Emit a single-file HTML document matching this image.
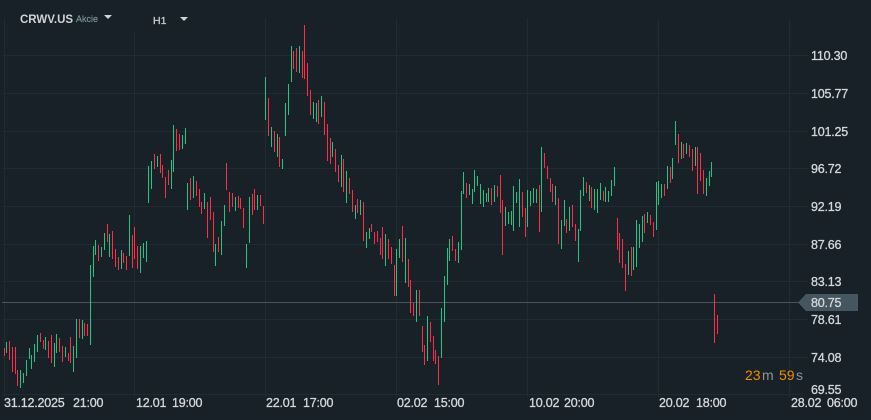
<!DOCTYPE html>
<html><head><meta charset="utf-8"><style>
html,body{margin:0;padding:0;background:#172127;width:871px;height:420px;overflow:hidden}
svg{display:block}
text{font-family:"Liberation Sans",sans-serif}
.p,.t{font-size:12.5px;letter-spacing:-.2px;fill:#d5d8da;stroke:#d5d8da;stroke-width:.3px}
</style></head><body>
<svg width="871" height="420" viewBox="0 0 871 420" xmlns="http://www.w3.org/2000/svg">
<rect width="871" height="420" fill="#172127"/>
<path shape-rendering="crispEdges" stroke="#212c32" stroke-width="1" fill="none" d="M2 55.5H808M2 93.5H808M2 131.5H808M2 168.5H808M2 206.5H808M2 244.5H808M2 281.5H808M2 319.5H808M2 357.5H808M2 394.5H803M4.5 18V397M134.5 32V397M265.5 18V397M396.5 18V397M527.5 18V397M658.5 18V397M789.5 18V397"/>
<path shape-rendering="crispEdges" stroke="#46555e" stroke-width="1" fill="none" d="M2 302.5H800"/>
<path shape-rendering="crispEdges" stroke="#ff2d46" stroke-width="1" fill="none" d="M4.5 348V356M9.5 341V360M12.5 347V372M15.5 347V374M17.5 370V386M40.5 333V342M43.5 340V349M48.5 341V358M51.5 335V363M59.5 338V352M62.5 346V362M68.5 353V361M70.5 337V363M79.5 319V338M84.5 323V336M87.5 324V336M98.5 245V261M107.5 224V242M112.5 231V259M115.5 249V267M118.5 257V270M123.5 253V263M126.5 256V270M132.5 235V268M134.5 227V259M137.5 246V269M154.5 154V169M160.5 154V173M162.5 165V178M165.5 177V198M168.5 170V185M176.5 129V151M179.5 134V150M190.5 178V200M196.5 181V196M199.5 189V207M201.5 202V214M207.5 202V238M210.5 197V220M213.5 212V252M218.5 237V252M226.5 163V190M229.5 192V212M232.5 193V207M238.5 196V208M240.5 198V209M243.5 208V228M252.5 194V215M254.5 189V210M260.5 195V206M263.5 206V224M268.5 98V136M274.5 131V152M279.5 137V167M293.5 51V69M296.5 48V72M302.5 51V78M304.5 25V79M307.5 63V96M310.5 90V115M318.5 100V124M324.5 102V135M327.5 124V161M330.5 138V164M335.5 149V172M338.5 165V182M343.5 159V192M349.5 178V194M352.5 190V212M357.5 199V213M363.5 202V241M371.5 224V232M374.5 232V244M377.5 231V242M380.5 238V255M382.5 227V259M388.5 239V259M391.5 247V264M394.5 265V296M402.5 226V262M408.5 259V287M410.5 280V313M413.5 303V316M419.5 290V316M422.5 326V352M424.5 345V365M430.5 322V342M433.5 336V361M435.5 350V364M438.5 356V385M452.5 236V251M455.5 249V261M466.5 183V198M491.5 188V205M497.5 186V197M500.5 175V213M502.5 200V255M522.5 192V217M525.5 208V237M539.5 185V232M544.5 153V168M547.5 166V179M550.5 178V192M552.5 184V202M558.5 198V244M566.5 219V233M572.5 205V227M575.5 224V241M586.5 182V193M591.5 187V208M603.5 191V201M617.5 218V250M619.5 233V263M622.5 239V268M625.5 264V291M631.5 247V276M644.5 214V233M650.5 215V225M653.5 222V237M664.5 184V196M670.5 167V183M678.5 134V163M683.5 144V158M689.5 145V157M692.5 149V171M697.5 147V194M700.5 153V181M703.5 170V194M714.5 294V343M717.5 315V334"/>
<path shape-rendering="crispEdges" stroke="#1fc77f" stroke-width="1" fill="none" d="M6.5 342V353M20.5 370V388M23.5 373V383M26.5 360V376M29.5 348V359M31.5 355V369M34.5 344V362M37.5 335V352M45.5 337V350M54.5 343V367M56.5 334V353M65.5 347V357M73.5 346V372M76.5 319V358M82.5 320V339M90.5 265V345M93.5 246V277M95.5 240V255M101.5 247V257M104.5 233V250M109.5 234V257M121.5 250V269M129.5 215V256M140.5 246V273M143.5 243V258M146.5 241V262M148.5 166V203M151.5 161V189M157.5 156V167M171.5 160V189M173.5 125V172M182.5 135V149M185.5 128V144M187.5 183V210M193.5 176V198M204.5 193V209M215.5 244V266M221.5 221V255M224.5 205V226M235.5 197V211M246.5 244V268M249.5 197V243M257.5 195V210M265.5 77V120M271.5 127V147M277.5 134V157M282.5 159V169M285.5 103V136M288.5 84V115M291.5 46V82M299.5 46V73M313.5 102V119M316.5 103V122M321.5 96V117M332.5 142V157M341.5 155V187M346.5 171V203M355.5 205V219M360.5 200V215M366.5 232V248M369.5 228V239M385.5 234V266M396.5 249V296M399.5 239V258M405.5 238V283M416.5 290V322M427.5 316V361M441.5 308V358M444.5 276V322M447.5 248V285M449.5 239V261M458.5 242V263M461.5 191V250M463.5 172V194M469.5 184V195M472.5 189V204M474.5 170V192M477.5 176V186M480.5 184V204M483.5 190V207M486.5 193V202M488.5 188V202M494.5 185V202M505.5 207V226M508.5 212V224M511.5 211V225M513.5 186V231M516.5 192V203M519.5 179V227M527.5 190V227M530.5 191V206M533.5 188V203M536.5 189V203M541.5 147V212M555.5 186V205M561.5 220V249M564.5 200V226M569.5 207V231M578.5 229V262M580.5 190V231M583.5 177V196M589.5 185V201M594.5 189V210M597.5 189V213M600.5 183V200M605.5 187V202M608.5 191V202M611.5 180V196M614.5 167V186M628.5 251V275M633.5 247V270M636.5 220V267M639.5 224V248M642.5 216V242M647.5 212V223M656.5 182V230M658.5 181V205M661.5 184V198M667.5 166V189M672.5 158V179M675.5 121V145M681.5 142V159M686.5 143V154M695.5 147V166M706.5 178V196M709.5 171V186M711.5 162V177"/>
<polygon points="798,302.5 806,294 858,294 858,311 806,311" fill="#465660"/>
<text x="20" y="23" font-size="11.5" font-weight="700" fill="#d0d4d6">CRWV.US</text>
<text x="76" y="22" font-size="9" fill="#82959f" stroke="#82959f" stroke-width=".15">Akcie</text>
<polygon points="104,15 112,15 108,19" fill="#d0d4d6"/>
<text x="153" y="24" font-size="10.5" fill="#c8cccf" stroke="#c8cccf" stroke-width=".3">H1</text>
<polygon points="180,17 188,17 184,21" fill="#d0d4d6"/>
<text class="p" x="811" y="60">110.30</text>
<text class="p" x="811" y="98">105.77</text>
<text class="p" x="811" y="136">101.25</text>
<text class="p" x="811" y="173">96.72</text>
<text class="p" x="811" y="211">92.19</text>
<text class="p" x="811" y="249">87.66</text>
<text class="p" x="811" y="286">83.13</text>
<text class="p" x="811" y="307">80.75</text>
<text class="p" x="811" y="324">78.61</text>
<text class="p" x="811" y="362">74.08</text>
<text class="p" x="811" y="394">69.55</text>
<text class="t" x="4" y="407">31.12.2025</text>
<text class="t" x="73" y="407">21:00</text>
<text class="t" x="136" y="407">12.01</text>
<text class="t" x="172" y="407">19:00</text>
<text class="t" x="266" y="407">22.01</text>
<text class="t" x="303" y="407">17:00</text>
<text class="t" x="397" y="407">02.02</text>
<text class="t" x="434" y="407">15:00</text>
<text class="t" x="529" y="407">10.02</text>
<text class="t" x="564" y="407">20:00</text>
<text class="t" x="659" y="407">20.02</text>
<text class="t" x="696" y="407">18:00</text>
<text class="t" x="791" y="407">28.02</text>
<text class="t" x="827" y="407">06:00</text>
<text x="745" y="380" font-size="14" fill="#f08c00">23</text>
<text x="762" y="380" font-size="14" fill="#8c9499">m</text>
<text x="779" y="380" font-size="14" fill="#f08c00">59</text>
<text x="796" y="380" font-size="14" fill="#8c9499">s</text>
</svg>
</body></html>
